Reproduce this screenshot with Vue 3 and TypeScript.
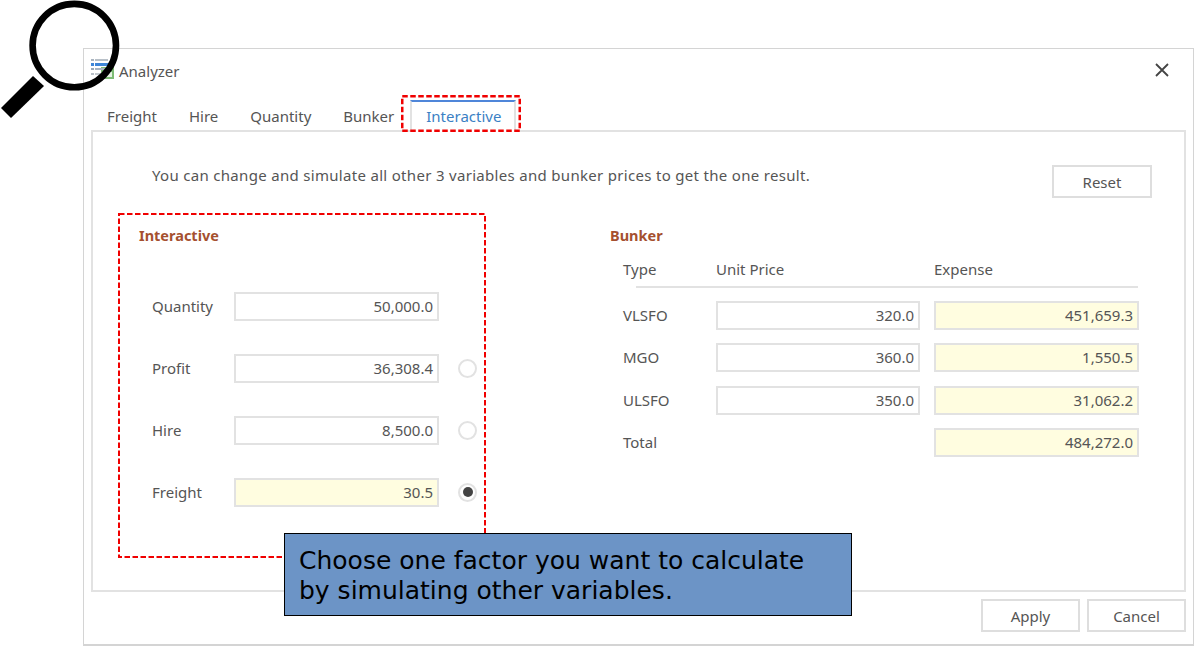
<script setup lang="ts">
interface FactorRow { label: string; value: string; radio: boolean; checked: boolean; computed: boolean }
interface BunkerRow { type: string; price: string; expense: string }

const tabs: string[] = ['Freight', 'Hire', 'Quantity', 'Bunker']

const factors: FactorRow[] = [
  { label: 'Quantity', value: '50,000.0', radio: false, checked: false, computed: false },
  { label: 'Profit', value: '36,308.4', radio: true, checked: false, computed: false },
  { label: 'Hire', value: '8,500.0', radio: true, checked: false, computed: false },
  { label: 'Freight', value: '30.5', radio: true, checked: true, computed: true },
]

const bunkers: BunkerRow[] = [
  { type: 'VLSFO', price: '320.0', expense: '451,659.3' },
  { type: 'MGO', price: '360.0', expense: '1,550.5' },
  { type: 'ULSFO', price: '350.0', expense: '31,062.2' },
]
</script>

<template>
  <div class="stage">
    <div class="dialog">
      <header class="titlebar">
        <svg class="app-icon" width="26" height="24" viewBox="0 0 26 24">
          <rect x="10" y="9" width="13" height="12" fill="#7dbb74" />
          <rect x="12" y="14" width="9" height="5" fill="#e6f2e3" />
          <g fill="#3f86d8">
            <rect x="0" y="1" width="3" height="2" fill="#a9b4c0" />
            <rect x="4" y="1" width="13" height="2" fill="#b8c0c8" />
            <rect x="0" y="5" width="3" height="3" />
            <rect x="4" y="5" width="15" height="3" />
            <rect x="0" y="10" width="3" height="2" fill="#9aa8b8" />
            <rect x="4" y="10" width="11" height="2" fill="#a8b4c2" />
            <rect x="0" y="15" width="3" height="2" fill="#b8c0c8" />
            <rect x="4" y="15" width="9" height="2" fill="#c4cad0" />
          </g>
        </svg>
        <span class="title">Analyzer</span>
        <svg class="close" width="14" height="14" viewBox="0 0 14 14">
          <path d="M1 1 L13 13 M13 1 L1 13" stroke="#444" stroke-width="1.8" fill="none" />
        </svg>
      </header>

      <nav class="tabs">
        <span v-for="t in tabs" :key="t" class="tab">{{ t }}</span>
        <span class="tab active">
          Interactive
          <svg class="tab-mark" width="120" height="37" viewBox="0 0 120 37">
            <rect x="1.25" y="1.25" width="117.5" height="34.5" fill="none" stroke="#f00000" stroke-width="2.5" stroke-dasharray="5.5 2.5" />
          </svg>
        </span>
      </nav>

      <main class="panel">
        <div class="intro">
          <p class="intro-text">You can change and simulate all other 3 variables and bunker prices to get the one result.</p>
          <button class="btn reset" type="button">Reset</button>
        </div>

        <div class="columns">
          <section class="interactive">
            <svg class="section-mark" width="368" height="345" viewBox="0 0 368 345">
              <rect x="1" y="1" width="366" height="343" fill="none" stroke="#f00000" stroke-width="2" stroke-dasharray="5.5 2.5" />
            </svg>
            <h2 class="heading">Interactive</h2>
            <div class="factors">
              <div v-for="f in factors" :key="f.label" class="factor">
                <span class="label">{{ f.label }}</span>
                <div class="field" :class="{ calc: f.computed }">{{ f.value }}</div>
                <span v-if="f.radio" class="radio" :class="{ on: f.checked }"></span>
              </div>
            </div>
          </section>

          <section class="bunker">
            <h2 class="heading">Bunker</h2>
            <div class="bunker-head">
              <span>Type</span>
              <span>Unit Price</span>
              <span>Expense</span>
            </div>
            <div class="bunker-grid">
              <template v-for="b in bunkers" :key="b.type">
                <span class="label">{{ b.type }}</span>
                <div class="field">{{ b.price }}</div>
                <div class="field calc">{{ b.expense }}</div>
              </template>
              <span class="label">Total</span>
              <span></span>
              <div class="field calc">484,272.0</div>
            </div>
          </section>
        </div>
      </main>

      <footer class="footer">
        <button class="btn" type="button">Apply</button>
        <button class="btn" type="button">Cancel</button>
      </footer>
    </div>

    <svg class="magnifier" width="125" height="122" viewBox="0 0 125 122">
      <circle cx="74.3" cy="45.6" r="41.7" fill="none" stroke="#000" stroke-width="6.6" />
      <polygon points="33,76 44,86 11,118 1,108" fill="#000" />
    </svg>

    <div class="callout">Choose one factor you want to calculate<br />by simulating other variables.</div>
  </div>
</template>

<style>
html, body { margin: 0; background: #fff; overflow: hidden; }
</style>

<style scoped>
.stage {
  position: relative;
  box-sizing: border-box;
  width: 1195px;
  height: 647px;
  padding: 48px 0 0 83px;
  background: #fff;
  font-family: "Noto Sans", "Open Sans", sans-serif;
  font-size: 15px;
  color: #555;
}
.dialog {
  box-sizing: border-box;
  width: 1111px;
  height: 598px;
  padding: 0 7px;
  border: 1px solid #d4d4d4;
  border-bottom-width: 2px;
  background: #fff;
  display: flex;
  flex-direction: column;
}
.titlebar {
  box-sizing: border-box;
  height: 51px;
  padding-bottom: 10px;
  flex: none;
  display: flex;
  align-items: center;
}
.app-icon { flex: none; margin-top: 1px; margin-right: 2px; }
.title { font-size: 15px; color: #555; margin-top: 2px; }
.close { margin-left: auto; margin-right: 17px; margin-top: 1px; }
.tabs {
  flex: none;
  height: 30px;
  display: flex;
  align-items: stretch;
}
.tab {
  position: relative;
  padding: 0 16px;
  line-height: 33px;
  white-space: nowrap;
  color: #555;
}
.tab.active {
  box-sizing: border-box;
  width: 106px;
  height: 32px;
  z-index: 1;
  padding: 0 14px;
  line-height: 29px;
  color: #3b7fc4;
  background: #fff;
  border: 2px solid #e2e2e2;
  border-top: 2px solid #4f86d9;
  border-bottom: 0;
}
.tab-mark {
  position: absolute;
  left: -11px;
  top: -7px;
  pointer-events: none;
}
.panel {
  box-sizing: border-box;
  flex: none;
  height: 462px;
  padding: 0 32px 0 25px;
  border: 2px solid #e2e2e2;
}
.intro {
  display: flex;
  justify-content: space-between;
  align-items: flex-start;
  padding-left: 34px;
  padding-top: 33px;
  height: 81px;
  box-sizing: border-box;
}
.intro-text { margin: 0; line-height: 20px; letter-spacing: 0.31px; }
.btn {
  box-sizing: border-box;
  width: 99px;
  height: 33px;
  padding: 0;
  font: inherit;
  color: #555;
  background: #fff;
  border: 2px solid #dedede;
}
.reset { width: 100px; }
.columns { display: flex; gap: 124px; }
.interactive {
  position: relative;
  box-sizing: border-box;
  width: 368px;
  height: 345px;
  flex: none;
}
.section-mark { position: absolute; left: 0; top: 0; pointer-events: none; }
.heading {
  margin: 0;
  font-size: 14.5px;
  font-weight: 700;
  line-height: 20px;
  color: #a5502f;
}
.interactive .heading { padding: 12px 0 0 21px; }
.bunker { padding-top: 12px; width: 528px; }
.factors {
  display: flex;
  flex-direction: column;
  gap: 33px;
  padding: 47px 0 0 34px;
}
.factor {
  display: flex;
  align-items: center;
  height: 29px;
}
.label { line-height: 29px; white-space: nowrap; }
.factor .label { width: 82px; flex: none; }
.field {
  box-sizing: border-box;
  height: 29px;
  padding: 0 4px;
  line-height: 25px;
  text-align: right;
  border: 2px solid #e2e2e2;
  background: #fff;
  color: #555;
}
.factor .field { width: 205px; flex: none; }
.field.calc { background: #fffde0; }
.radio {
  box-sizing: border-box;
  flex: none;
  width: 19px;
  height: 19px;
  margin-left: 19px;
  margin-top: -1px;
  border: 2px solid #e2e2e2;
  border-radius: 50%;
  background: #fff;
  display: flex;
  align-items: center;
  justify-content: center;
}
.radio.on::after {
  content: "";
  width: 10px;
  height: 10px;
  border-radius: 50%;
  background: #444;
}
.bunker-head {
  display: grid;
  grid-template-columns: 93px 218px 205px;
  margin-left: 13px;
  height: 43px;
  padding-top: 14px;
  box-sizing: border-box;
  line-height: 20px;
  position: relative;
  margin-bottom: 12.5px;
}
.bunker-head::after {
  content: "";
  position: absolute;
  left: 13px;
  right: 0;
  bottom: 0;
  height: 2px;
  background: #e2e2e2;
}
.bunker-grid {
  display: grid;
  grid-template-columns: 93px 204px 219px;
  row-gap: 13.5px;
  margin-left: 13px;
  grid-auto-rows: 29px;
}
.bunker-grid > :nth-child(3n) { margin-left: 14px; width: 205px; }
.footer {
  flex: none;
  display: flex;
  justify-content: flex-end;
  gap: 7px;
  padding-top: 7px;
}
.magnifier {
  position: absolute;
  left: 0;
  top: 0;
  pointer-events: none;
}
.callout {
  position: absolute;
  left: 284px;
  top: 533px;
  box-sizing: border-box;
  width: 568px;
  height: 83px;
  padding: 12px 14px;
  background: #6c94c6;
  border: 1px solid #000;
  font-family: "DejaVu Sans", sans-serif;
  font-size: 25px;
  line-height: 30px;
  color: #000;
}
</style>
